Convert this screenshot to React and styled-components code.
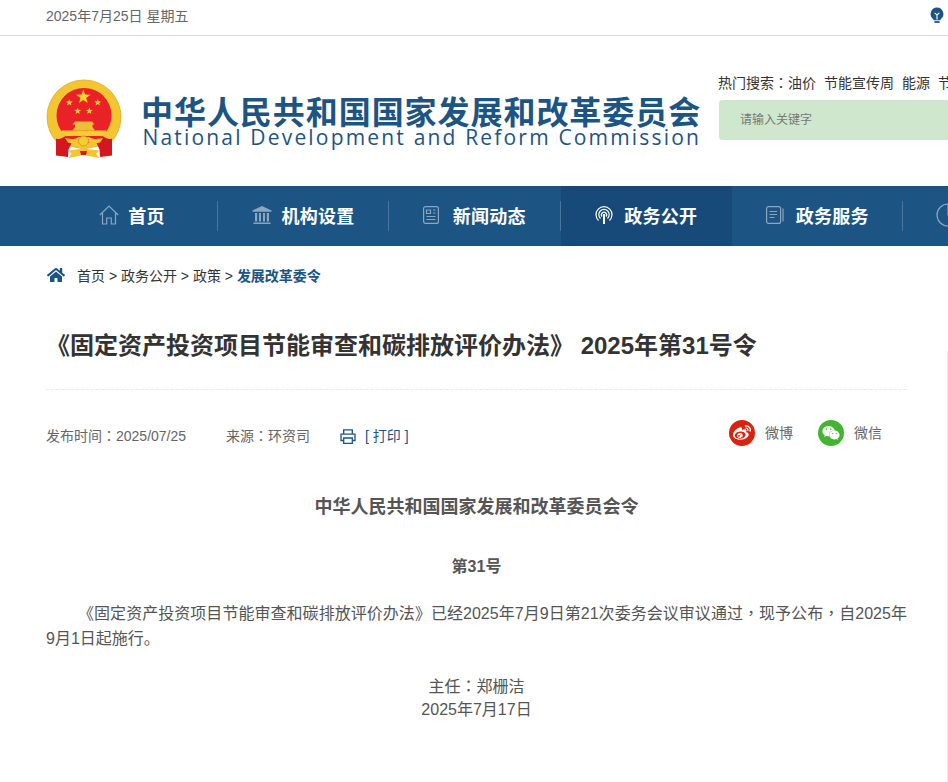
import styled, { createGlobalStyle } from "styled-components";
import { FaHome, FaWeibo, FaWeixin } from "react-icons/fa";

const GlobalStyle = createGlobalStyle`
  html, body {
    margin: 0;
    padding: 0;
    background: #fff;
    overflow: hidden;
  }
  body {
    font-family: "Liberation Sans", "Noto Sans CJK SC", sans-serif;
    color: #333;
  }
  * {
    box-sizing: border-box;
  }
`;

const Page = styled.div`
  position: relative;
  width: 948px;
  height: 782px;
  overflow: hidden;
`;

const EdgeLine = styled.div`
  position: absolute;
  right: 0;
  top: 351px;
  bottom: 0;
  width: 1px;
  background: #eee;
`;

const Punct = styled.span`
  font-family: "Noto Sans CJK TC", sans-serif;
  line-height: 0;
`;

const TopBar = styled.div`
  height: 36px;
  padding: 0 4px 6px 46px;
  border-bottom: 1px solid #d9dde2;
  display: flex;
  align-items: center;
  justify-content: space-between;
  font-size: 14px;
  color: #666;
`;

const Header = styled.header`
  height: 150px;
  padding: 38px 0 0 46px;
  display: flex;
  width: 1300px;
`;

const EmblemWrap = styled.div`
  margin-top: 5px;
  width: 76px;
  height: 80px;
`;

const LogoTexts = styled.div`
  margin-left: 19px;
  padding-top: 20px;
  width: 558px;
`;

const LogoCn = styled.div`
  font-family: "Noto Sans CJK SC", sans-serif;
  font-weight: 700;
  font-size: 32px;
  line-height: 32px;
  letter-spacing: 0.95px;
  margin-bottom: 1px;
  color: #1c5484;
  white-space: nowrap;
`;

const LogoEn = styled.div`
  font-family: "Open Sans", sans-serif;
  font-size: 21px;
  line-height: 20px;
  letter-spacing: 2.18px;
  padding-left: 1.5px;
  color: #1c5484;
  white-space: nowrap;
`;

const SearchCol = styled.div`
  margin-left: 20px;
  width: 400px;
`;

const HotRow = styled.div`
  font-size: 14px;
  line-height: 18px;
  color: #333;
  white-space: nowrap;
  display: flex;
  gap: 8px;
  margin-left: -1px;
  margin-bottom: 8px;
`;

const SearchBox = styled.div`
  height: 40px;
  border-radius: 4px;
  background: #cfe8cd;
  padding-left: 21px;
  font-size: 12px;
  line-height: 40px;
  color: #777;
`;

const Nav = styled.nav`
  height: 60px;
  width: 1300px;
  padding-left: 46.4px;
  background: #1c5484;
  display: flex;
`;

const NavItem = styled.a`
  width: 171.4px;
  height: 60px;
  padding-bottom: 2px;
  display: flex;
  align-items: center;
  justify-content: center;
  gap: 9px;
  font-size: 18px;
  letter-spacing: 0.25px;
  font-weight: 700;
  color: #fff;
  position: relative;
  white-space: nowrap;
  background: ${(p) => (p.$active ? "#174a78" : "transparent")};
  svg {
    color: ${(p) => (p.$active ? "#fff" : "#8aa6c0")};
    overflow: visible;
  }
  &::after {
    content: "";
    display: ${(p) => (p.$noLine ? "none" : "block")};
    position: absolute;
    right: 0;
    top: 15px;
    width: 1px;
    height: 30px;
    background: #4b7699;
  }
`;

const Crumbs = styled.div`
  height: 60px;
  padding: 0 0 2px 47px;
  display: flex;
  align-items: center;
  font-size: 14px;
  color: #333;
  gap: 12px;
  svg {
    color: #1c5484;
  }
`;

const CrumbStrong = styled.strong`
  color: #1c5484;
`;

const Article = styled.article`
  width: 861px;
  margin-left: 46px;
`;

const Title = styled.h1`
  margin: 0;
  padding-top: 23px;
  height: 84px;
  border-bottom: 1px dashed #e6e8ea;
  font-size: 24px;
  line-height: 34px;
  font-weight: 700;
  color: #333;
  white-space: nowrap;
`;

const Meta = styled.div`
  height: 105px;
  display: flex;
  align-items: flex-start;
  font-size: 14px;
  color: #666;
  padding-top: 37px;
`;

const MetaText = styled.span`
  line-height: 18px;
  margin-right: 40px;
`;

const PrintLink = styled.span`
  display: flex;
  align-items: center;
  gap: 9px;
  line-height: 18px;
  color: #1c5484;
  margin-left: -10px;
  margin-top: 0;
`;

const Share = styled.div`
  margin-left: auto;
  margin-right: 25px;
  margin-top: -7px;
  display: flex;
  gap: 25px;
`;

const ShareItem = styled.span`
  display: flex;
  align-items: center;
  gap: 10px;
  line-height: 26px;
  color: #666;
`;

const ShareCircle = styled.span`
  width: 26px;
  height: 26px;
  border-radius: 50%;
  background: ${(p) => p.$color};
  color: #fff;
  display: flex;
  align-items: center;
  justify-content: center;
`;

const Body = styled.div`
  font-size: 16px;
  color: #555;
`;

const CenterHead = styled.div`
  text-align: center;
  font-weight: 700;
  font-size: ${(p) => p.$size}px;
  line-height: 24px;
  margin-bottom: ${(p) => p.$after}px;
`;

const Para = styled.p`
  margin: 0 0 24px;
  line-height: 25px;
  text-indent: 32px;
  text-align: justify;
`;

const Sign = styled.div`
  text-align: center;
  line-height: 23px;
`;

const House = () => (
  <svg width="20" height="20" viewBox="0 0 20 20" fill="none" stroke="currentColor" strokeWidth="1.2">
    <path d="M.8 10 10 1l9.2 9M3.5 8v11h4.2v-6h4.600v6h4.200V8" />
  </svg>
);

const Bank = () => (
  <svg width="20" height="20" viewBox="0 0 20 20" fill="currentColor">
    <path d="M10 1 .5 5.500v1.300h19V5.500zM1.500 17.500h17V19h-17zM3 8h2.200v8.500H3zM7 8h2v8.500H7zM11 8h2v8.500h-2zM14.800 8H17v8.500h-2.200z" />
  </svg>
);

const News = () => (
  <svg width="20" height="18" viewBox="0 0 20 18" fill="none" stroke="currentColor" strokeWidth="1.2">
    <rect x="-.4" y=".6" width="14.800" height="16.800" rx="2" />
    <path d="M2.500 4h4v3.500h-4zM9 4h2.500M9 7h2.500M2.500 10.500h9M2.500 13.500h9" />
  </svg>
);

const Signal = () => (
  <svg width="20" height="18" viewBox="0 0 20 18" fill="none" stroke="currentColor" strokeWidth="1.2">
    <path d="M3.500 14.500a8 8 0 1 1 11 0M5.500 12.500a5.200 5.200 0 1 1 7 0M7 10.500a2.600 2.600 0 1 1 4 0" />
    <path d="M9 8v10" strokeWidth="2" />
  </svg>
);

const Book = () => (
  <svg width="20" height="18" viewBox="0 0 20 18" fill="none" stroke="currentColor" strokeWidth="1.2">
    <rect x="-.4" y=".6" width="14" height="16.800" rx="2" />
    <path d="M2.500 5.500H10M2.500 8.500H10M2.500 11.500h5M16 2.500v13" />
  </svg>
);

const Clock = () => (
  <svg width="24" height="24" viewBox="0 0 24 24" fill="none" stroke="currentColor" strokeWidth="1.2">
    <circle cx="12" cy="12" r="11" />
    <path d="M12 1v11h11" />
  </svg>
);

const Bulb = () => (
  <svg width="14" height="16" viewBox="0 0 16 18">
    <path fill="#1c5484" d="M8 .5a7.500 7.500 0 0 0-4 13.700V15h8v-.8A7.500 7.500 0 0 0 8 .5z" />
    <path fill="none" stroke="#fff" strokeWidth="1.300" d="M5.300 6.500 8 9l2.700-2.500M8 9v5" />
    <path fill="#1c5484" d="M5 16h6v2H5z" />
  </svg>
);

const starPoints = (cx, cy, r) => {
  const points = [];
  for (let i = 0; i < 10; i++) {
    const radius = i % 2 === 0 ? r : r * 0.4;
    const angle = (Math.PI / 5) * i - Math.PI / 2;
    points.push(`${cx + radius * Math.cos(angle)},${cy + radius * Math.sin(angle)}`);
  }
  return points.join(" ");
};

const Emblem = () => (
  <svg width="76" height="80" viewBox="0 0 76 80">
    <path fill="#f2c531" stroke="#e2ab20" strokeWidth=".8" d="M12 64.300A37 37 0 1 1 64 64.300L38 70z" />
    <circle cx="38" cy="36.500" r="27.500" fill="#ea2227" />
    <polygon fill="#fbd72b" points={starPoints(37.3, 18, 7.5)} />
    <polygon fill="#fbd72b" points={starPoints(23.3, 23.5, 3.6)} />
    <polygon fill="#fbd72b" points={starPoints(51.7, 23.5, 3.6)} />
    <polygon fill="#fbd72b" points={starPoints(31.7, 32, 3.6)} />
    <polygon fill="#fbd72b" points={starPoints(43.3, 32, 3.6)} />
    <path fill="#efbe39" d="M26.500 45.500 29 42.500h17l2.500 3H46.500v2.500l2.500 3.500H26.500L29 48v-2.500z" />
    <path fill="#f6cb33" d="M15.500 51.500h45V54l-4 3h-37l-4-3z" />
    <path fill="#d5161f" d="M10 59.500c3 1.500 7-.5 9.500-2.500l7 5-4 8.500-.5 7.500-12-1.500zM66 59.500c-3 1.500-7-.5-9.500-2.500l-7 5 4 8.500.5 7.500 12-1.500z" />
    <path fill="#f2c531" d="M19 59c6 2 11 1 14-1h10c3 2 8 3 14 1l-3 4.500c-5 1.500-9 1-12-.5h-8c-3 1.500-7 2-12 .5z" />
    <circle cx="37.500" cy="62" r="5" fill="#f6cb33" stroke="#c98f15" strokeWidth=".7" />
    <path fill="#f2c531" d="M22.500 71.500c5-1 10-1 15-2.500 5 1.500 10 1.500 16 2.500l-3.500 3 3 4.500c-5-1-10-2-15.500-3-5 1-10 2-15 3l3-4.500z" />
    <path fill="#d5161f" d="M34 72h7l-1 4h-5z" />
  </svg>
);

const Printer = () => (
  <svg width="16" height="15" viewBox="0 0 16 15" fill="none" stroke="#1c5484" strokeWidth="1.300">
    <path d="M3.700 5V.8h8.600V5M3.700 11.500H1V5.200h14v6.300h-2.700" />
    <path d="M3.700 9h8.600v5.300H3.700z" />
  </svg>
);

export default function App() {
  return (
    <Page>
      <GlobalStyle />
      <TopBar>
        <span>2025年7月25日 星期五</span>
        <Bulb />
      </TopBar>
      <Header>
        <EmblemWrap>
          <Emblem />
        </EmblemWrap>
        <LogoTexts>
          <LogoCn>中华人民共和国国家发展和改革委员会</LogoCn>
          <LogoEn>National Development and Reform Commission</LogoEn>
        </LogoTexts>
        <SearchCol>
          <HotRow>
            <span>热门搜索<Punct>：</Punct>油价</span>
            <span>节能宣传周</span>
            <span>能源</span>
            <span>节能</span>
          </HotRow>
          <SearchBox>请输入关键字</SearchBox>
        </SearchCol>
      </Header>
      <Nav>
        <NavItem><House />首页</NavItem>
        <NavItem><Bank />机构设置</NavItem>
        <NavItem><News />新闻动态</NavItem>
        <NavItem $active $noLine><Signal />政务公开</NavItem>
        <NavItem><Book />政务服务</NavItem>
        <NavItem><Clock />互动交流</NavItem>
      </Nav>
      <Crumbs>
        <FaHome size={18} />
        <span>首页 &gt; 政务公开 &gt; 政策 &gt; <CrumbStrong>发展改革委令</CrumbStrong></span>
      </Crumbs>
      <Article>
        <Title>《固定资产投资项目节能审查和碳排放评价办法》 2025年第31号令</Title>
        <Meta>
          <MetaText>发布时间<Punct>：</Punct>2025/07/25</MetaText>
          <MetaText>来源<Punct>：</Punct>环资司</MetaText>
          <PrintLink><Printer />[ 打印 ]</PrintLink>
          <Share>
            <ShareItem><ShareCircle $color="#d9230f"><FaWeibo size={18} /></ShareCircle>微博</ShareItem>
            <ShareItem><ShareCircle $color="#41b52f"><FaWeixin size={18} /></ShareCircle>微信</ShareItem>
          </Share>
        </Meta>
        <Body>
          <CenterHead $size={18} $after={36}>中华人民共和国国家发展和改革委员会令</CenterHead>
          <CenterHead $size={16} $after={22}>第31号</CenterHead>
          <Para>《固定资产投资项目节能审查和碳排放评价办法》已经2025年7月9日第21次委务会议审议通过<Punct>，</Punct>现予公布<Punct>，</Punct>自2025年9月1日起施行。</Para>
          <Sign>主任<Punct>：</Punct>郑栅洁</Sign>
          <Sign>2025年7月17日</Sign>
        </Body>
      </Article>
      <EdgeLine />
    </Page>
  );
}
